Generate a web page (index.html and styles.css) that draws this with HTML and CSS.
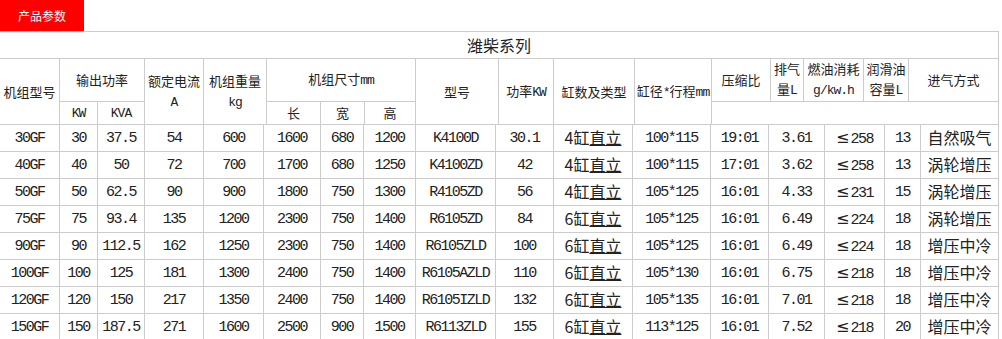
FILE: index.html
```html
<!DOCTYPE html>
<html lang="zh-CN">
<head>
<meta charset="utf-8">
<title>产品参数</title>
<link rel="stylesheet" href="styles.css">
</head>
<body>
<div class="page">
  <div class="tab">产品参数</div>
  <table class="hd">
    <colgroup>
      <col class="h1"><col class="h2"><col class="h3"><col class="h4"><col class="h5"><col class="h6"><col class="h7"><col class="h8"><col class="h9"><col class="h10"><col class="h11"><col class="h12"><col class="h13"><col class="h14"><col class="h15"><col class="h16"><col class="h17">
    </colgroup>
    <tr class="r1"><th colspan="17" class="title">潍柴系列</th></tr>
    <tr class="r2">
      <th rowspan="2">机组型号</th>
      <th colspan="2">输出功率</th>
      <th rowspan="2">额定电流<br><span class="en">A</span></th>
      <th rowspan="2">机组重量<br><span class="en">kg</span></th>
      <th colspan="3">机组尺寸<span class="en">mm</span></th>
      <th rowspan="2">型号</th>
      <th rowspan="2">功率<span class="en">KW</span></th>
      <th rowspan="2">缸数及类型</th>
      <th rowspan="2">缸径<span class="en">*</span>行程<span class="en">mm</span></th>
      <th>压缩比</th>
      <th>排气<br>量<span class="en">L</span></th>
      <th>燃油消耗<br><span class="en">g/kw.h</span></th>
      <th>润滑油<br>容量<span class="en">L</span></th>
      <th>进气方式</th>
    </tr>
    <tr class="r3">
      <th><span class="en">KW</span></th>
      <th><span class="en">KVA</span></th>
      <th>长</th>
      <th>宽</th>
      <th>高</th>
      <th colspan="5"></th>
    </tr>
  </table>
  <table class="dt">
    <colgroup>
      <col class="d1"><col class="d2"><col class="d3"><col class="d4"><col class="d5"><col class="d6"><col class="d7"><col class="d8"><col class="d9"><col class="d10"><col class="d11"><col class="d12"><col class="d13"><col class="d14"><col class="d15"><col class="d16"><col class="d17">
    </colgroup>
    <tr><td>30GF</td><td>30</td><td>37.5</td><td>54</td><td>600</td><td>1600</td><td>680</td><td>1200</td><td>K4100D</td><td>30.1</td><td class="cn">4缸<span class="u">直立</span></td><td>100*115</td><td>19:01</td><td>3.61</td><td><span class="le">≤</span>258</td><td>13</td><td class="cn">自然吸气</td></tr>
    <tr><td>40GF</td><td>40</td><td>50</td><td>72</td><td>700</td><td>1700</td><td>680</td><td>1250</td><td>K4100ZD</td><td>42</td><td class="cn">4缸<span class="u">直立</span></td><td>100*115</td><td>17:01</td><td>3.62</td><td><span class="le">≤</span>258</td><td>13</td><td class="cn">涡轮增压</td></tr>
    <tr><td>50GF</td><td>50</td><td>62.5</td><td>90</td><td>900</td><td>1800</td><td>750</td><td>1300</td><td>R4105ZD</td><td>56</td><td class="cn">4缸<span class="u">直立</span></td><td>105*125</td><td>16:01</td><td>4.33</td><td><span class="le">≤</span>231</td><td>15</td><td class="cn">涡轮增压</td></tr>
    <tr><td>75GF</td><td>75</td><td>93.4</td><td>135</td><td>1200</td><td>2300</td><td>750</td><td>1400</td><td>R6105ZD</td><td>84</td><td class="cn">6缸<span class="u">直立</span></td><td>105*125</td><td>16:01</td><td>6.49</td><td><span class="le">≤</span>224</td><td>18</td><td class="cn">涡轮增压</td></tr>
    <tr><td>90GF</td><td>90</td><td>112.5</td><td>162</td><td>1250</td><td>2300</td><td>750</td><td>1400</td><td>R6105ZLD</td><td>100</td><td class="cn">6缸<span class="u">直立</span></td><td>105*125</td><td>16:01</td><td>6.49</td><td><span class="le">≤</span>224</td><td>18</td><td class="cn">增压中冷</td></tr>
    <tr><td>100GF</td><td>100</td><td>125</td><td>181</td><td>1300</td><td>2400</td><td>750</td><td>1400</td><td>R6105AZLD</td><td>110</td><td class="cn">6缸<span class="u">直立</span></td><td>105*130</td><td>16:01</td><td>6.75</td><td><span class="le">≤</span>218</td><td>18</td><td class="cn">增压中冷</td></tr>
    <tr><td>120GF</td><td>120</td><td>150</td><td>217</td><td>1350</td><td>2400</td><td>750</td><td>1400</td><td>R6105IZLD</td><td>132</td><td class="cn">6缸<span class="u">直立</span></td><td>105*135</td><td>16:01</td><td>7.01</td><td><span class="le">≤</span>218</td><td>18</td><td class="cn">增压中冷</td></tr>
    <tr><td>150GF</td><td>150</td><td>187.5</td><td>271</td><td>1600</td><td>2500</td><td>900</td><td>1500</td><td>R6113ZLD</td><td>155</td><td class="cn">6缸<span class="u">直立</span></td><td>113*125</td><td>16:01</td><td>7.52</td><td><span class="le">≤</span>218</td><td>20</td><td class="cn">增压中冷</td></tr>
  </table>
</div>
</body>
</html>
```

FILE: styles.css
```css
html, body {
  margin: 0;
  padding: 0;
  background: #fff;
}

body {
  font-family: "Noto Sans CJK SC", sans-serif;
  color: #222;
}

.page {
  width: 999px;
}

.tab {
  width: 84px;
  height: 31px;
  background: #ff0000;
  color: #fff;
  font-size: 12px;
  display: flex;
  align-items: center;
  justify-content: center;
}

table {
  border-collapse: separate;
  border-spacing: 0;
  table-layout: fixed;
  width: 999px;
}

th, td {
  border-right: 1px solid #ccc;
  border-bottom: 1px solid #ccc;
  padding: 0;
  text-align: center;
  vertical-align: middle;
  white-space: nowrap;
  overflow: hidden;
}

/* header table */
.hd {
  border-top: 1px solid #ccc;
}

.hd th {
  font-weight: normal;
  font-size: 13px;
  line-height: 20px;
}

.hd .title {
  font-size: 16px;
}

.hd .r1 { height: 27px; }
.hd .r2 { height: 41px; }
.hd .r3 { height: 22px; }

.en {
  font-family: "Liberation Mono", monospace;
  letter-spacing: -1px;
}

.h1 { width: 60px; }
.h2 { width: 38px; }
.h3 { width: 47px; }
.h4 { width: 59px; }
.h5 { width: 63px; }
.h6 { width: 54px; }
.h7 { width: 44px; }
.h8 { width: 51px; }
.h9 { width: 83px; }
.h10 { width: 55px; }
.h11 { width: 81px; }
.h12 { width: 77px; }
.h13 { width: 59px; }
.h14 { width: 33px; }
.h15 { width: 60px; }
.h16 { width: 45px; }
.h17 { width: 90px; }

/* data table */
.dt tr { height: 27px; }

.dt td {
  font-family: "Liberation Mono", "Noto Sans CJK SC", monospace;
  font-size: 15px;
  letter-spacing: -1.5px;
  line-height: 18px;
  padding-top: 2px;
}

.dt td.cn {
  font-family: "Noto Sans CJK SC", sans-serif;
  font-size: 16px;
  letter-spacing: 0;
  line-height: 20px;
  padding-top: 0;
  padding-bottom: 3px;
}

.le {
  font-family: "DejaVu Sans", sans-serif;
  font-size: 16px;
  letter-spacing: 0;
  margin-right: 1px;
}

.u {
  text-decoration: underline;
  text-underline-offset: 1px;
}

.d1 { width: 60px; }
.d2 { width: 38px; }
.d3 { width: 47px; }
.d4 { width: 59px; }
.d5 { width: 60px; }
.d6 { width: 57px; }
.d7 { width: 43px; }
.d8 { width: 52px; }
.d9 { width: 80px; }
.d10 { width: 58px; }
.d11 { width: 79px; }
.d12 { width: 78px; }
.d13 { width: 58px; }
.d14 { width: 56px; }
.d15 { width: 60px; }
.d16 { width: 36px; }
.d17 { width: 78px; }
```
